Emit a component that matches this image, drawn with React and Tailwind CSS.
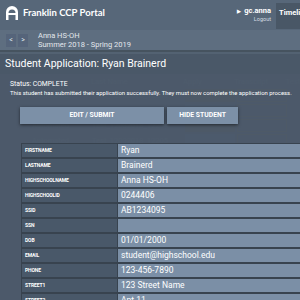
import React from 'react';

const fields = [
  ['FIRSTNAME', 'Ryan'],
  ['LASTNAME', 'Brainerd'],
  ['HIGHSCHOOLNAME', 'Anna HS-OH'],
  ['HIGHSCHOOLID', '0244406'],
  ['SSID', 'AB1234095'],
  ['SSN', ''],
  ['DOB', '01/01/2000'],
  ['EMAIL', 'student@highschool.edu'],
  ['PHONE', '123-456-7890'],
  ['STREET1', '123 Street Name'],
  ['STREET2', 'Apt 11'],
];

const bgRows = [
  ['Automated', 'Test_12032018_12202'],
  ['Automated', 'Test_12032018_12203'],
  ['Automated', 'Test_12032018_12204'],
  ['Automated', 'Test_12032018_12205'],
  ['Anne', 'Brainerd'],
  ['Eric', 'Einc'],
  ['Jimmy', 'Wayne'],
  ['Heather', 'Blank'],
  ['Karen', 'Molson'],
  ['Karen', 'Molson'],
  ['Kris', 'Erbsen'],
  ['Kris', 'Erbsen'],
];

const Logo = () => (
  <svg width="14" height="14" viewBox="0 0 14 14">
    <path
      d="M1 14 V6 A6 6 0 0 1 13 6 V14 H10.5 V9 H3.5 V14 Z M3.5 7 H10.5 A3.5 3.5 0 0 0 3.5 7 Z"
      fill="#ffffff"
      fillRule="evenodd"
    />
  </svg>
);

const App = () => {
  return (
    <div className="relative w-[300px] h-[300px] overflow-hidden bg-[#536272] font-['Roboto','Liberation_Sans',sans-serif] text-white">
      {/* Top bar */}
      <div className="h-[30px] bg-[#576779] flex items-start">
        <div className="flex items-center gap-[4px] pl-[5px] pt-[6px]">
          <Logo />
          <span className="text-[9.5px] font-bold font-['Lato','Roboto',sans-serif]">Franklin CCP Portal</span>
        </div>
        <div className="ml-auto flex">
          <div className="flex flex-col items-end pt-[7px] pr-[5px] leading-none">
            <span className="text-[7.5px] font-bold">
              <span className="text-[5px] mr-[3px] align-middle">▶</span>gc.anna
            </span>
            <span className="text-[5.5px] text-[#d5dbe2] mt-[2px]">Logout</span>
          </div>
          <div className="mt-[3px] h-[26px] w-[24px] bg-[#495766] pl-[3px] pt-[6px] text-[7.5px] font-bold leading-none overflow-hidden whitespace-nowrap">
            Timeline
          </div>
        </div>
      </div>

      {/* Sub bar */}
      <div className="h-[22px] bg-[#5e6e80] border-b-[2px] border-[#46535f] flex items-center pl-[6px]">
        <div className="flex gap-[2px]">
          <div className="w-[10px] h-[13px] bg-[#55647a] flex items-center justify-center text-[7px] text-[#dfe4ea]">&lt;</div>
          <div className="w-[10px] h-[13px] bg-[#55647a] flex items-center justify-center text-[7px] text-[#dfe4ea]">&gt;</div>
        </div>
        <div className="ml-[10px] flex flex-col leading-[9px] text-[7.5px] text-[#e3e7ec]">
          <span>Anna HS-OH</span>
          <span>Summer 2018 - Spring 2019</span>
        </div>
      </div>

      {/* Background page table */}
      <div className="pl-[30px] pt-[24px] text-[7.5px] text-[#627183]">
        <div className="flex h-[12px] items-center">
          <span className="w-[62px]"></span>
          <span className="w-[93px]">Last Name</span>
          <span className="w-[52px]">Apply</span>
          <span className="w-[52px]">Transcript</span>
          <span>Test</span>
        </div>
        {bgRows.map((r, i) => (
          <div key={i} className="flex h-[15px] items-center">
            <span className="w-[62px] pl-[2px]">{r[0]}</span>
            <span className="w-[93px]">{r[1]}</span>
            <span className={`w-[50px] h-[13px] mr-[2px] ${i % 2 === 0 ? 'bg-[#5b5e58]' : 'bg-[#586b80]'}`}></span>
            <span className="w-[50px] h-[13px] border border-[#6b6a55]"></span>
          </div>
        ))}
      </div>

      {/* Modal overlay */}
      <div className="absolute left-0 right-0 top-[54px] bottom-0 bg-[#4b5969]/90">
        <div className="h-[20px] bg-[#4a5868] flex items-center pl-[5px] text-[10.5px] text-white">
          Student Application: Ryan Brainerd
        </div>
        <div className="pl-[10px] pt-[6px] text-[5.9px] leading-[9px] text-white">
          <div className="text-[6.8px]">Status: COMPLETE</div>
          <div className="whitespace-nowrap">This student has submitted their application successfully. They must now complete the application process.</div>
        </div>
        <div className="flex gap-[3px] pl-[20px] mt-[9px]">
          <button className="w-[144px] h-[17px] bg-[#7c90a7] text-[6.8px] font-bold text-white shadow-[0_1px_3px_rgba(0,0,0,0.55)]">
            EDIT / SUBMIT
          </button>
          <button className="w-[71px] h-[17px] bg-[#7c90a7] text-[6.8px] font-bold text-white shadow-[0_1px_3px_rgba(0,0,0,0.55)]">
            HIDE STUDENT
          </button>
        </div>
        <div className="ml-[21px] mt-[19px] w-[300px]">
          {fields.map(([k, v]) => (
            <div key={k} className="flex h-[15px]">
              <div className="w-[97px] bg-[#495869]/90 border border-[#38434f] pl-[3px] flex items-center text-[5px] font-bold tracking-tight">
                {k}
              </div>
              <div className="flex-1 bg-[#7b8fa6] border border-[#38434f] border-l-0 pl-[3px] flex items-center text-[8.5px]">
                {v}
              </div>
            </div>
          ))}
        </div>
      </div>
    </div>
  );
};

export default App;
